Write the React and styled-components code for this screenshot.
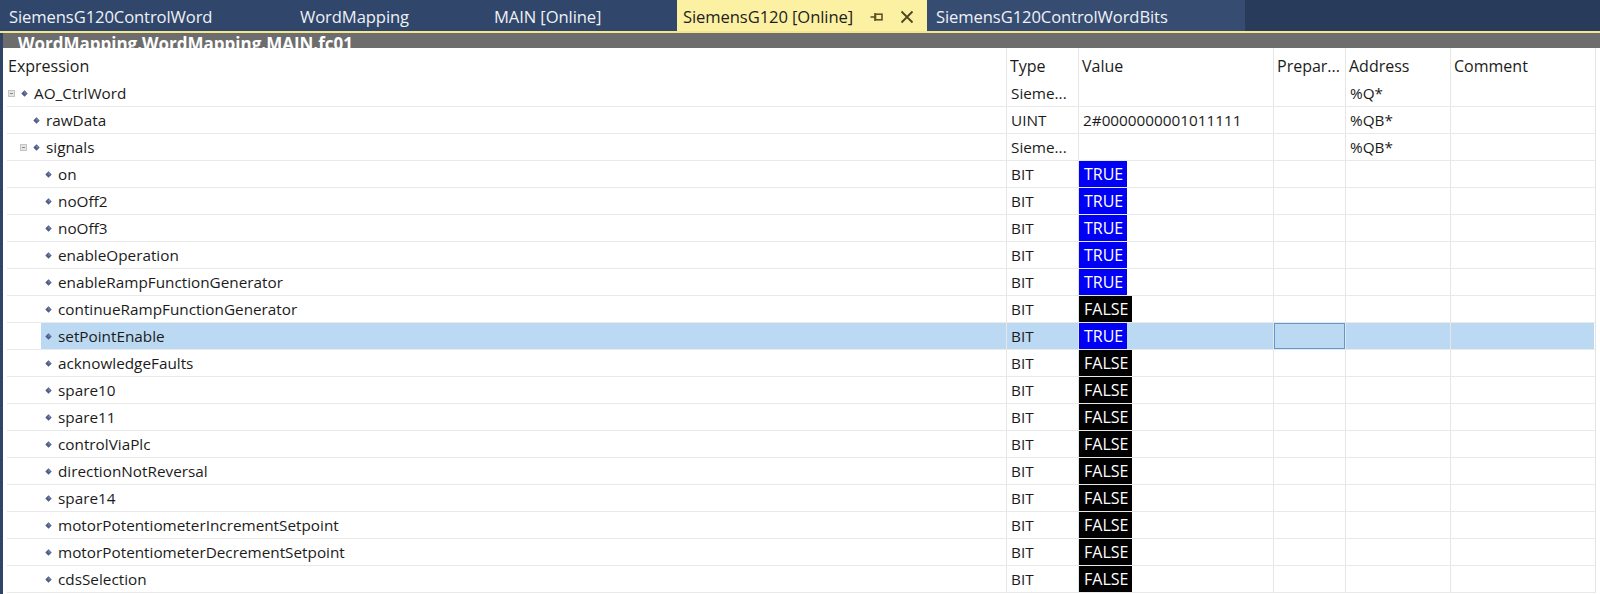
import React from "react";
import styled, { createGlobalStyle } from "styled-components";

const GlobalStyle = createGlobalStyle`
  html, body {
    margin: 0;
    padding: 0;
    background: #ffffff;
  }
  body {
    font-family: "Open Sans", "Noto Sans", sans-serif;
    overflow: hidden;
    color: #1b1b1b;
  }
`;

const tabs = [
  { title: "SiemensG120ControlWord", width: 291 },
  { title: "WordMapping", width: 194 },
  { title: "MAIN [Online]", width: 192 },
  { title: "SiemensG120 [Online]", width: 250, active: true },
  { title: "SiemensG120ControlWordBits", width: 318, hover: true },
];

const bits = [
  ["on", true],
  ["noOff2", true],
  ["noOff3", true],
  ["enableOperation", true],
  ["enableRampFunctionGenerator", true],
  ["continueRampFunctionGenerator", false],
  ["setPointEnable", true],
  ["acknowledgeFaults", false],
  ["spare10", false],
  ["spare11", false],
  ["controlViaPlc", false],
  ["directionNotReversal", false],
  ["spare14", false],
  ["motorPotentiometerIncrementSetpoint", false],
  ["motorPotentiometerDecrementSetpoint", false],
  ["cdsSelection", false],
];

const rows = [
  { name: "AO_CtrlWord", level: 0, expander: true, type: "Sieme...", address: "%Q*" },
  { name: "rawData", level: 1, type: "UINT", text: "2#0000000001011111", address: "%QB*" },
  { name: "signals", level: 1, expander: true, type: "Sieme...", address: "%QB*" },
  ...bits.map(([name, value]) => ({
    name,
    level: 2,
    type: "BIT",
    bit: value,
    selected: name === "setPointEnable",
  })),
];

const PinIcon = () => (
  <svg width="14" height="12" viewBox="0 0 14 12">
    <path d="M0.5 6 H5" stroke="#5e5326" strokeWidth="1.6" fill="none" />
    <path d="M5 2 V10" stroke="#5e5326" strokeWidth="1.6" fill="none" />
    <rect x="5.5" y="3.2" width="6.5" height="5.6" fill="none" stroke="#5e5326" strokeWidth="1.6" />
  </svg>
);

const CloseIcon = () => (
  <svg width="14" height="14" viewBox="0 0 14 14">
    <path d="M1.5 1.5 L12.5 12.5 M12.5 1.5 L1.5 12.5" stroke="#4f4621" strokeWidth="1.8" fill="none" />
  </svg>
);

const Diamond = () => (
  <svg width="7" height="7" viewBox="0 0 7 7">
    <path d="M3.5 0.3 L6.7 3.5 L3.5 6.7 L0.3 3.5 Z" fill="#4f5d8c" />
    <path d="M3.5 1.4 L5.6 3.5 L3.5 3.5 Z" fill="#8d9bc4" />
  </svg>
);

const App = () => {
  return (
    <Window>
      <GlobalStyle />
      <TabBar>
        {tabs.map(tab => (
          <Tab key={tab.title} width={tab.width} active={tab.active} hover={tab.hover}>
            <TabTitle>{tab.title}</TabTitle>
            {tab.active && (
              <TabButtons>
                <PinIcon />
                <CloseIcon />
              </TabButtons>
            )}
          </Tab>
        ))}
        <TabFiller />
      </TabBar>
      <Body>
        <PathBar>
          <PathText>WordMapping.WordMapping.MAIN.fc01</PathText>
        </PathBar>
        <Table>
          <HeaderRow>
            <HeadCell first>Expression</HeadCell>
            <HeadCell>Type</HeadCell>
            <HeadCell>Value</HeadCell>
            <HeadCell>Prepar...</HeadCell>
            <HeadCell>Address</HeadCell>
            <HeadCell>Comment</HeadCell>
          </HeaderRow>
          {rows.map(row => (
            <Row key={row.name}>
              <ExprCell level={row.level}>
                <ExpanderSlot>{row.expander && <Expander />}</ExpanderSlot>
                <Label selected={row.selected}>
                  <Diamond />
                  <Name>{row.name}</Name>
                </Label>
              </ExprCell>
              <Cell selected={row.selected}>{row.type}</Cell>
              <ValueCell selected={row.selected}>
                {row.text && <ValueText>{row.text}</ValueText>}
                {row.bit !== undefined && (
                  <Badge on={row.bit}>{row.bit ? "TRUE" : "FALSE"}</Badge>
                )}
              </ValueCell>
              <Cell selected={row.selected} focused={row.selected} />
              <Cell selected={row.selected}>{row.address}</Cell>
              <Cell selected={row.selected} />
            </Row>
          ))}
        </Table>
      </Body>
    </Window>
  );
};

export default App;

const Window = styled.div`
  width: 1600px;
  height: 594px;
  overflow: hidden;
  display: flex;
  flex-direction: column;
  background: #ffffff;
`;

const TabBar = styled.div`
  display: flex;
  height: 31px;
  flex-shrink: 0;
  background: #293b5b;
  border-bottom: 2px solid #f3e68c;
`;

const Tab = styled.div`
  width: ${p => p.width}px;
  flex-shrink: 0;
  display: flex;
  align-items: center;
  box-sizing: border-box;
  padding: 2px 0 0 ${p => (p.active ? 6 : 9)}px;
  background: ${p => (p.active ? "#fcf0a2" : p.hover ? "#364c71" : "#30466a")};
  color: ${p => (p.active ? "#1e1e1e" : "#eef1f6")};
  font-size: 16.6px;
  white-space: nowrap;
`;

const TabTitle = styled.span`
  letter-spacing: -0.1px;
`;

const TabButtons = styled.span`
  display: flex;
  align-items: center;
  gap: 16px;
  margin-left: 17px;
  padding-top: 1px;
`;

const TabFiller = styled.div`
  flex: 1;
`;

const Body = styled.div`
  flex: 1;
  display: flex;
  flex-direction: column;
  border-left: 3px solid #2f4467;
  min-height: 0;
`;

const PathBar = styled.div`
  height: 15px;
  flex-shrink: 0;
  background: #6d6d6d;
  overflow: hidden;
  padding-left: 15px;
`;

const PathText = styled.div`
  color: #ffffff;
  font-weight: 700;
  font-size: 17px;
  line-height: 22px;
  white-space: nowrap;
`;

const columns = "999px 72px 195px 72px 105px 144px";

const Table = styled.div`
  margin-left: 4px;
  width: 1588px;
  border-right: 1px solid #e4e4e4;
  font-size: 15.3px;
`;

const HeaderRow = styled.div`
  display: grid;
  grid-template-columns: ${columns};
  height: 32px;
  font-size: 16px;
`;

const HeadCell = styled.div`
  box-sizing: border-box;
  padding: 4px 0 0 ${p => (p.first ? 1 : 3)}px;
  border-left: ${p => (p.first ? "none" : "1px solid #e6e6e6")};
  display: flex;
  align-items: center;
  white-space: nowrap;
`;

const Row = styled.div`
  display: grid;
  grid-template-columns: ${columns};
  height: 27px;
  box-sizing: border-box;
  border-bottom: 1px solid #e9e9e9;
`;

const ExprCell = styled.div`
  display: flex;
  align-items: stretch;
  padding-left: ${p => 1 + p.level * 12}px;
`;

const ExpanderSlot = styled.div`
  width: 9px;
  display: flex;
  align-items: center;
`;

const Expander = styled.span`
  width: 5px;
  height: 5px;
  background: #e4e4e4;
  border: 1px solid #c4c4c4;
  position: relative;
  &::after {
    content: "";
    position: absolute;
    left: 1px;
    right: 1px;
    top: 2px;
    height: 1px;
    background: #8a8a8a;
  }
`;

const Label = styled.div`
  flex: 1;
  display: flex;
  align-items: center;
  gap: 6px;
  padding-left: 4px;
  background: ${p => (p.selected ? "#bcd9f3" : "transparent")};
`;

const Name = styled.span`
  white-space: nowrap;
`;

const Cell = styled.div`
  box-sizing: border-box;
  display: flex;
  align-items: center;
  padding-left: 4px;
  border-left: 1px solid #e6e6e6;
  background: ${p => (p.selected ? "#bcd9f3" : "transparent")};
  box-shadow: ${p => (p.focused ? "inset 0 0 0 1px #5f98d1" : "none")};
  white-space: nowrap;
`;

const ValueCell = styled(Cell)`
  padding-left: 0;
  align-items: stretch;
`;

const ValueText = styled.span`
  display: flex;
  align-items: center;
  padding-left: 4px;
`;

const Badge = styled.span`
  display: flex;
  align-items: center;
  padding: 0 4px 0 5px;
  background: ${p => (p.on ? "#0000f5" : "#000000")};
  color: #ffffff;
  font-size: 16px;
`;
